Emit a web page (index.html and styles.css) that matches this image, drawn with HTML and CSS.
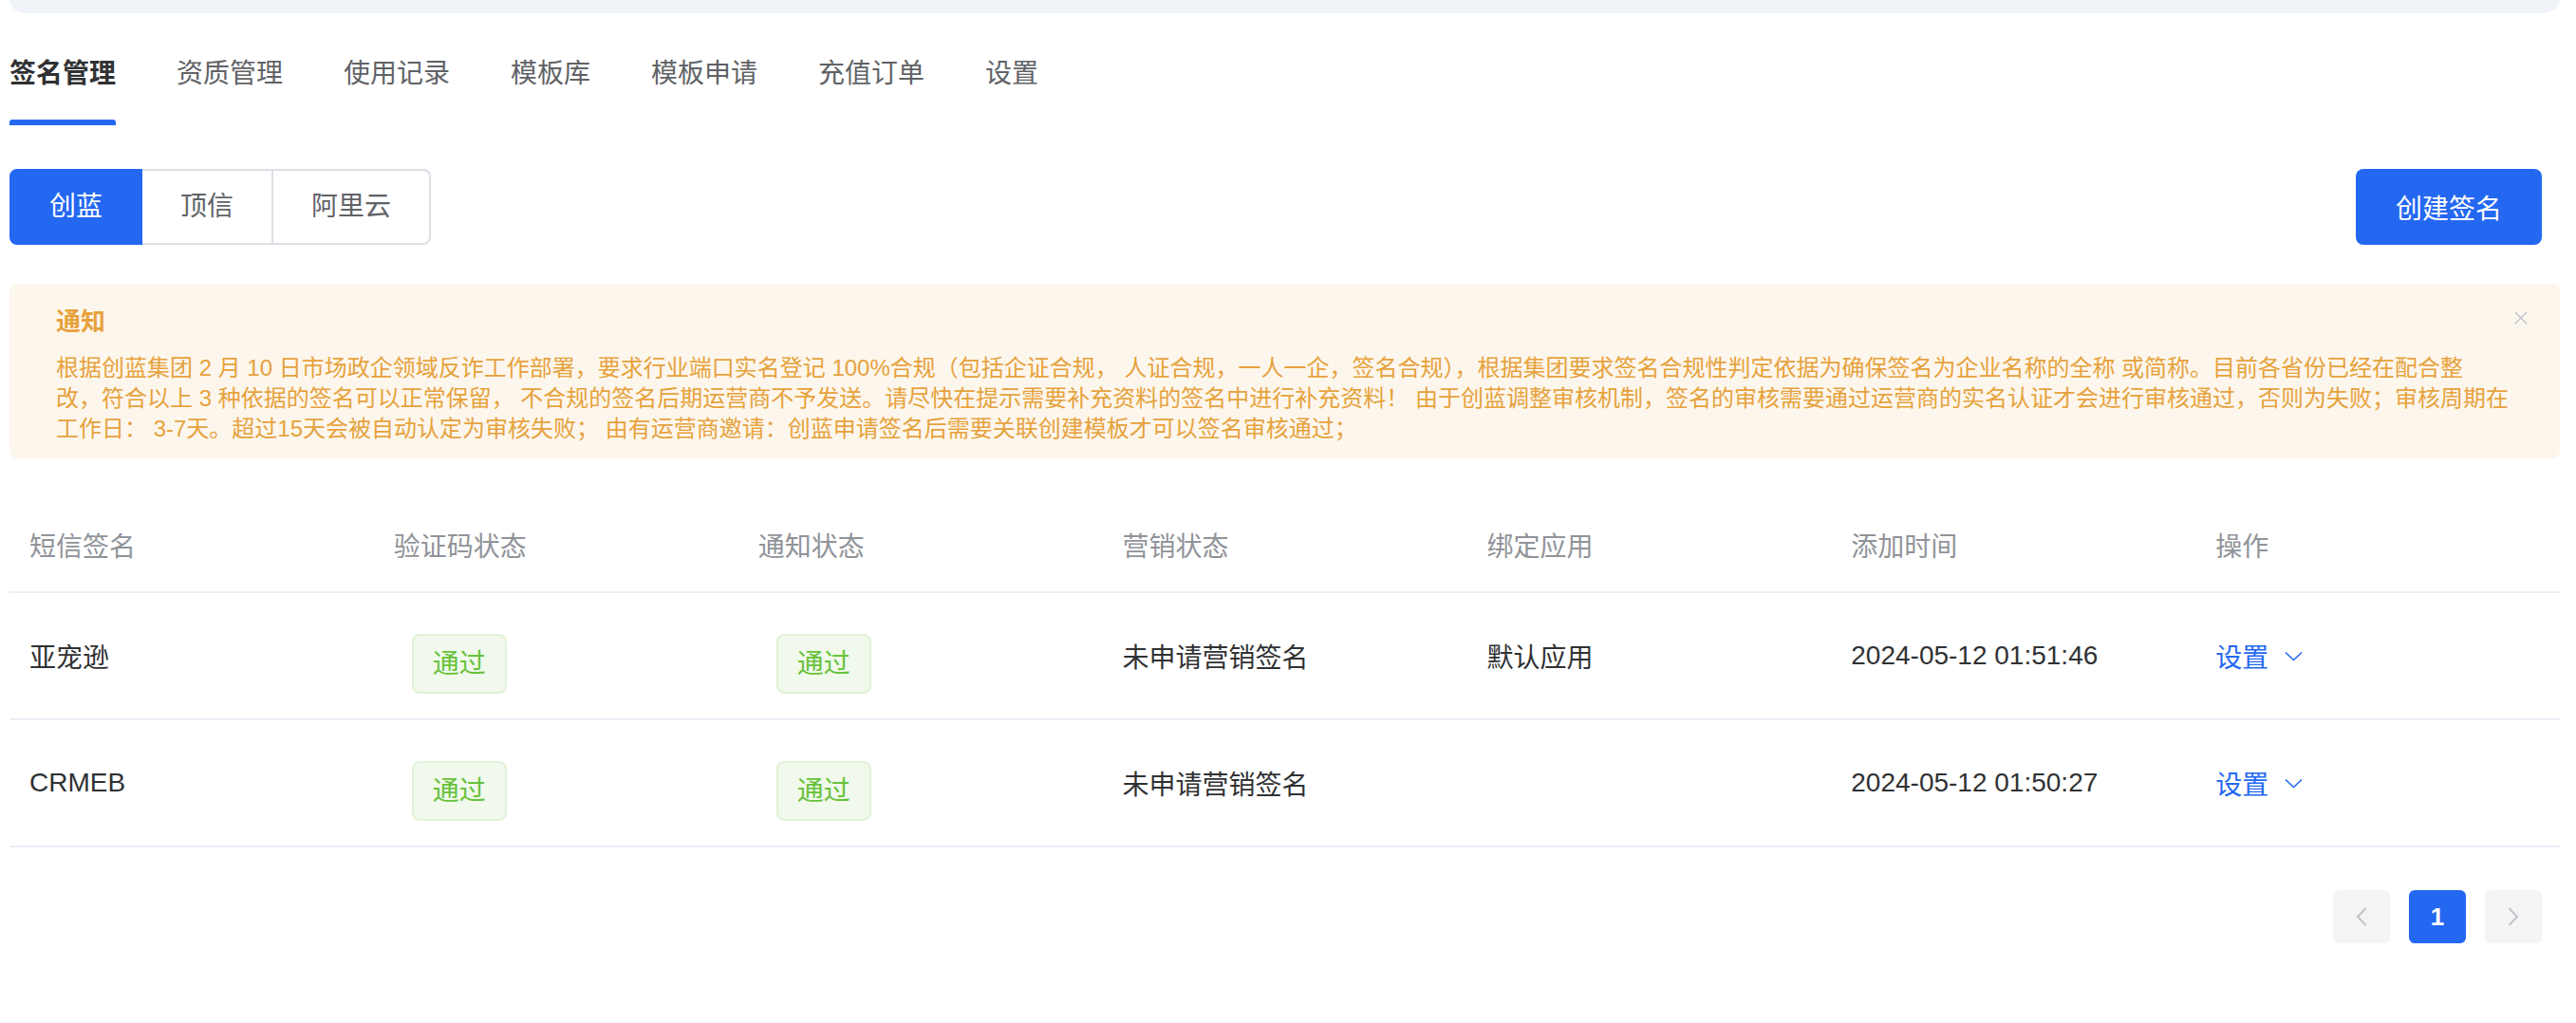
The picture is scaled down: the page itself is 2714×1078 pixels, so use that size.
FILE: index.html
```html
<!DOCTYPE html>
<html lang="zh-CN">
<head>
<meta charset="utf-8">
<title>签名管理</title>
<link rel="stylesheet" href="styles.css">
</head>
<body>
<div class="topbar"></div>
<div class="page">
  <nav class="tabs">
    <div class="tab active">签名管理</div>
    <div class="tab">资质管理</div>
    <div class="tab">使用记录</div>
    <div class="tab">模板库</div>
    <div class="tab">模板申请</div>
    <div class="tab">充值订单</div>
    <div class="tab">设置</div>
  </nav>

  <div class="toolbar">
    <div class="seg">
      <div class="seg-item active">创蓝</div>
      <div class="seg-item">顶信</div>
      <div class="seg-item">阿里云</div>
    </div>
    <button class="btn-primary">创建签名</button>
  </div>

  <div class="notice">
    <div class="notice-body">
      <div class="notice-title">通知</div>
      <div class="notice-text">根据创蓝集团 2 月 10 日市场政企领域反诈工作部署，要求行业端口实名登记 100%合规（包括企证合规， 人证合规，一人一企，签名合规），根据集团要求签名合规性判定依据为确保签名为企业名称的全称 或简称。目前各省份已经在配合整<br>改，符合以上 3 种依据的签名可以正常保留， 不合规的签名后期运营商不予发送。请尽快在提示需要补充资料的签名中进行补充资料！ 由于创蓝调整审核机制，签名的审核需要通过运营商的实名认证才会进行审核通过，否则为失败；审核周期在<br>工作日： 3-7天。超过15天会被自动认定为审核失败； 由有运营商邀请：创蓝申请签名后需要关联创建模板才可以签名审核通过；</div>
    </div>
    <svg class="notice-close" width="14" height="14" viewBox="0 0 14 14"><path d="M1 1L13 13M13 1L1 13" stroke="#c0c4cc" stroke-width="1.5" fill="none"/></svg>
  </div>

  <div class="table">
    <div class="tr th">
      <div class="td">短信签名</div>
      <div class="td">验证码状态</div>
      <div class="td">通知状态</div>
      <div class="td">营销状态</div>
      <div class="td">绑定应用</div>
      <div class="td">添加时间</div>
      <div class="td">操作</div>
    </div>
    <div class="tr">
      <div class="td">亚宠逊</div>
      <div class="td"><span class="tag">通过</span></div>
      <div class="td"><span class="tag">通过</span></div>
      <div class="td">未申请营销签名</div>
      <div class="td">默认应用</div>
      <div class="td">2024-05-12 01:51:46</div>
      <div class="td op">设置<svg width="19" height="11" viewBox="0 0 19 11"><path d="M1 1.5L9.5 9.5L18 1.5" stroke="#2468f2" stroke-width="1.6" fill="none"/></svg></div>
    </div>
    <div class="tr">
      <div class="td">CRMEB</div>
      <div class="td"><span class="tag">通过</span></div>
      <div class="td"><span class="tag">通过</span></div>
      <div class="td">未申请营销签名</div>
      <div class="td"></div>
      <div class="td">2024-05-12 01:50:27</div>
      <div class="td op">设置<svg width="19" height="11" viewBox="0 0 19 11"><path d="M1 1.5L9.5 9.5L18 1.5" stroke="#2468f2" stroke-width="1.6" fill="none"/></svg></div>
    </div>
  </div>

  <div class="pager">
    <div class="pg-btn"><svg width="12" height="20" viewBox="0 0 12 20"><path d="M10.5 1L2 10L10.5 19" stroke="#c0c4cc" stroke-width="2" fill="none"/></svg></div>
    <div class="pg-btn current">1</div>
    <div class="pg-btn"><svg width="12" height="20" viewBox="0 0 12 20"><path d="M1.5 1L10 10L1.5 19" stroke="#c0c4cc" stroke-width="2" fill="none"/></svg></div>
  </div>
</div>
</body>
</html>
```

FILE: styles.css
```css
* { box-sizing: border-box; }

body {
  margin: 0;
  background: #ffffff;
  font-family: "Liberation Sans", "Noto Sans CJK SC", sans-serif;
  color: #303133;
}

.topbar {
  height: 14px;
  margin: 0 17px 0 10px;
  background: #eff2f7;
  border-radius: 0 0 20px 20px / 0 0 14px 14px;
}

.page {
  padding: 0 17px 0 10px;
}

/* tabs */
.tabs {
  display: flex;
  gap: 64px;
  padding-top: 44px;
}
.tab {
  display: flex;
  flex-direction: column;
  font-size: 28px;
  line-height: 40px;
  color: #606266;
}
.tab::after {
  content: "";
  display: block;
  height: 6px;
  margin-top: 28px;
  border-radius: 3px 3px 0 0;
  background: transparent;
}
.tab.active {
  color: #303133;
  font-weight: 700;
}
.tab.active::after {
  background: #2468f2;
}

/* toolbar */
.toolbar {
  margin-top: 46px;
  padding-right: 19px;
  display: flex;
  justify-content: space-between;
  align-items: center;
}
.seg {
  display: flex;
}
.seg-item {
  height: 80px;
  padding: 0 40px;
  font-size: 28px;
  line-height: 76px;
  color: #606266;
  border: 2px solid #dcdfe6;
  border-left: none;
  background: #fff;
}
.seg-item:first-child {
  border-left: 2px solid #dcdfe6;
  border-radius: 8px 0 0 8px;
}
.seg-item:last-child {
  border-radius: 0 8px 8px 0;
}
.seg-item.active {
  background: #2468f2;
  border-color: #2468f2;
  color: #fff;
}
.btn-primary {
  height: 80px;
  padding: 0 42px;
  border: none;
  border-radius: 8px;
  background: #2468f2;
  color: #fff;
  font-family: inherit;
  font-size: 28px;
}

/* notice */
.notice {
  margin-top: 41px;
  display: flex;
  background: #fdf6ec;
  border-radius: 8px;
  padding: 22px 34px 15px 49px;
}
.notice-body {
  flex: 1;
  min-width: 0;
}
.notice-title {
  font-size: 26px;
  font-weight: 700;
  line-height: 36px;
  color: #e6a23c;
  margin-bottom: 15px;
}
.notice-text {
  font-size: 24px;
  line-height: 32px;
  color: #e6a23c;
  white-space: nowrap;
}
.notice-close {
  flex-shrink: 0;
  margin-top: 7px;
}

/* table */
.table {
  margin-top: 42px;
}
.tr {
  display: grid;
  grid-template-columns: repeat(7, 1fr);
  height: 134px;
  border-bottom: 2px solid #ebeef5;
  font-size: 28px;
  color: #303133;
}
.tr.th {
  height: 100px;
  color: #909399;
}
.td {
  display: flex;
  align-items: center;
  padding-left: 21px;
  white-space: nowrap;
}
.tag {
  display: inline-block;
  margin-left: 19px;
  margin-top: 17px;
  height: 63px;
  padding: 0 20px;
  border: 2px solid #e1f3d8;
  border-radius: 8px;
  background: #f0f9eb;
  color: #67c23a;
  font-size: 28px;
  line-height: 59px;
}
.op {
  color: #2468f2;
  gap: 17px;
}

/* pager */
.pager {
  margin-top: 45px;
  padding-right: 19px;
  display: flex;
  justify-content: flex-end;
  gap: 20px;
}
.pg-btn {
  width: 60px;
  height: 56px;
  border-radius: 6px;
  background: #f4f4f5;
  display: flex;
  align-items: center;
  justify-content: center;
}
.pg-btn.current {
  background: #2468f2;
  color: #fff;
  font-size: 26px;
  font-weight: 700;
}
```
